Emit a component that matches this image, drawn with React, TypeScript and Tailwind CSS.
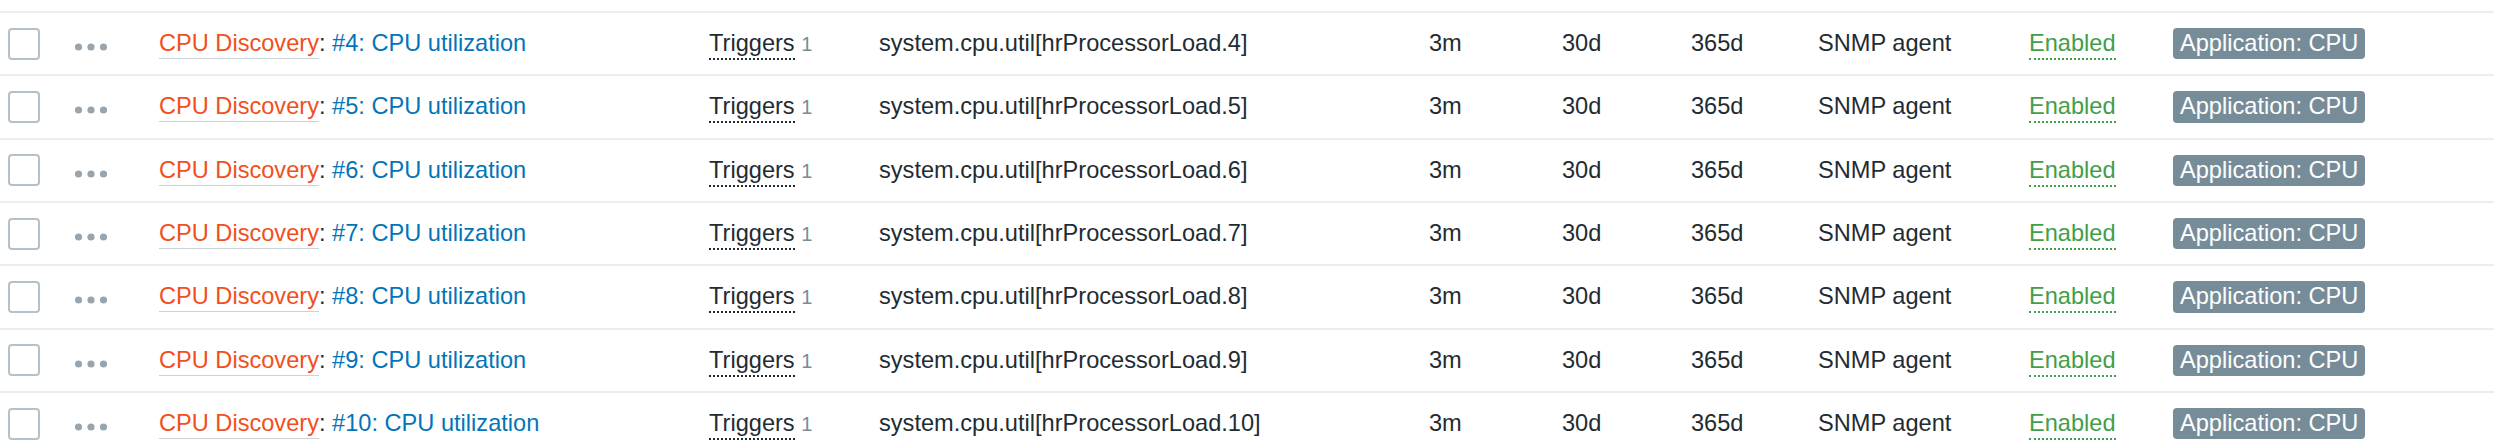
import React from 'react';

const ROWS = [4, 5, 6, 7, 8, 9, 10];

const Dots: React.FC = () => (
  <svg width="32" height="8" viewBox="0 0 32 8" className="mt-[7px]">
    <circle cx="3.5" cy="4" r="3.6" fill="#98a5ae" />
    <circle cx="16" cy="4" r="3.6" fill="#98a5ae" />
    <circle cx="28.5" cy="4" r="3.6" fill="#98a5ae" />
  </svg>
);

const Row: React.FC<{ n: number }> = ({ n }) => (
  <div className="grid h-[63.33px] grid-cols-[75px_84px_550px_170px_550px_133px_129px_127px_211px_144px_1fr] items-center border-b-2 border-[#ebeef0] text-[23.6px] leading-[1.15] text-[#1f2c33]">
    <div className="pl-[8px]">
      <div className="h-[32px] w-[32px] rounded-[4px] border-2 border-[#b3c1c8] bg-white" />
    </div>
    <div className="flex">
      <Dots />
    </div>
    <div className="whitespace-nowrap">
      <span className="border-b-[1.5px] border-[#c9d2d7] pb-[2px] text-[#f24f1d]">CPU Discovery</span>
      <span>: </span>
      <span className="text-[#0275b8]">#{n}: CPU utilization</span>
    </div>
    <div className="whitespace-nowrap">
      <span className="border-b-2 border-dotted border-[#1f2c33] pb-[2px]">Triggers</span>{' '}
      <span className="text-[20px] text-[#768d99]">1</span>
    </div>
    <div className="whitespace-nowrap">system.cpu.util[hrProcessorLoad.{n}]</div>
    <div>3m</div>
    <div>30d</div>
    <div>365d</div>
    <div className="whitespace-nowrap">SNMP agent</div>
    <div>
      <span className="border-b-2 border-dotted border-[#429e47] pb-[2px] text-[#429e47]">Enabled</span>
    </div>
    <div className="flex">
      <span className="whitespace-nowrap rounded-[4px] bg-[#768d99] px-[7px] py-[2px] leading-[27.6px] text-white">Application: CPU</span>
    </div>
  </div>
);

export default function App() {
  return (
    <div className="h-[441px] w-[2494px] overflow-hidden bg-white font-['Liberation_Sans',Arial,sans-serif]">
      <div className="h-[13px] border-b-2 border-[#ebeef0]" />
      {ROWS.map((n) => (
        <Row key={n} n={n} />
      ))}
    </div>
  );
}
